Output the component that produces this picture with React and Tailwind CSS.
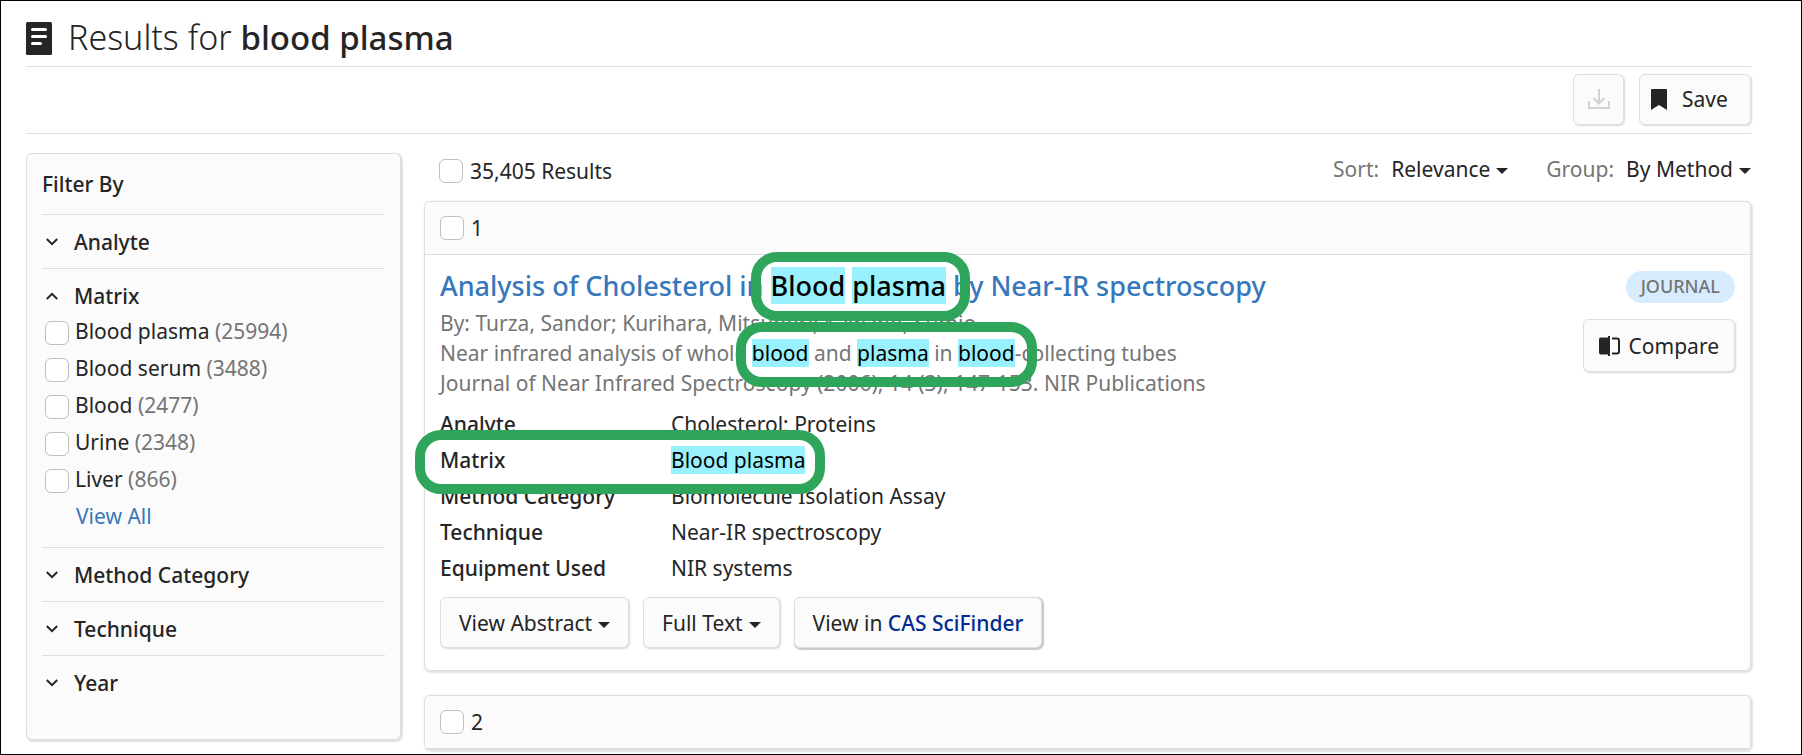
import clsx from "clsx";

const facets = [
    { name: "Analyte" },
    {
        name: "Matrix",
        options: [
            { label: "Blood plasma", count: 25994 },
            { label: "Blood serum", count: 3488 },
            { label: "Blood", count: 2477 },
            { label: "Urine", count: 2348 },
            { label: "Liver", count: 866 },
        ],
    },
    { name: "Method Category" },
    { name: "Technique" },
    { name: "Year" },
];

const details = [
    ["Analyte", "Cholesterol; Proteins"],
    ["Matrix", "Blood plasma"],
    ["Method Category", "Biomolecule Isolation Assay"],
    ["Technique", "Near-IR spectroscopy"],
    ["Equipment Used", "NIR systems"],
];

const Chevron = ({ open }) => (
    <svg viewBox="0 0 12 8" className={clsx("w-3 h-2 shrink-0", open && "rotate-180")} fill="none" stroke="#252525" strokeWidth="2">
        <path d="M0.8 1l5.2 5.2L11.2 1" />
    </svg>
);

const Caret = () => (
    <svg viewBox="0 0 12 6" className="w-3 h-[6px] mt-1 shrink-0" fill="#252525">
        <path d="M0 0h12L6 6z" />
    </svg>
);

const Checkbox = ({ id }) => (
    <input
        id={id}
        type="checkbox"
        className="appearance-none size-6 shrink-0 rounded-md border border-[#bfbfbf] bg-white checked:bg-[#3777bc]"
    />
);

const PanelButton = ({ className, children, ...props }) => (
    <button
        className={clsx("flex items-center rounded-md border border-[#dedede] bg-[#fbfbfb]", className)}
        {...props}
    >
        {children}
    </button>
);

const Mark = ({ children }) => <mark className="bg-[#98f1fd] text-black">{children}</mark>;

const Ring = ({ className }) => (
    <span className={clsx("absolute z-10 border-[10px] border-[#2ea55b] rounded-[26px] pointer-events-none", className)} />
);

const Facet = ({ name, options }) => (
    <section className="border-t border-[#dedede] pt-3">
        <h3>
            <button className="flex items-center gap-4 pl-1 h-[29px] font-medium" aria-expanded={!!options}>
                <Chevron open={!!options} />
                {name}
            </button>
        </h3>
        {options ? (
            <div className="pt-[7px] pb-[17px]">
                <ul>
                    {options.map((option, i) => (
                        <li key={option.label} className="flex items-start gap-[6px] h-[37px] pl-[3px]">
                            <span className="pt-1 h-7">
                                <Checkbox id={`facet-${i}`} />
                            </span>
                            <label htmlFor={`facet-${i}`} className="leading-[28px]">
                                {option.label} <span className="text-[#757575]">({option.count})</span>
                            </label>
                        </li>
                    ))}
                </ul>
                <a href="#all" className="block pl-[34px] leading-[28px] text-[#3777bc]">View All</a>
            </div>
        ) : (
            <div className="h-3" />
        )}
    </section>
);

const Sidebar = () => (
    <aside className="w-[375px] shrink-0 self-start rounded-md border border-[#dedede] bg-[#fbfbfb] shadow-[1px_1px_1px_1px_#e2e2e2] px-[15px] pb-[30px]">
        <h2 className="h-[60px] pt-4 leading-[28px] font-medium">Filter By</h2>
        {facets.map((facet) => (
            <Facet key={facet.name} {...facet} />
        ))}
    </aside>
);

const ResultCard = ({ number, children }) => (
    <article className="rounded-md border border-[#dedede] bg-white shadow-[1px_1px_2px_1px_#e2e2e2]">
        <div className="flex items-center gap-[7px] h-[53px] px-[15px] rounded-t-md border-b border-[#dedede] bg-[#fbfbfb]">
            <Checkbox id={`result-${number}`} />
            <label htmlFor={`result-${number}`}>{number}</label>
        </div>
        {children}
    </article>
);

const App = () => {
    return (
        <div className="h-screen overflow-hidden border border-black bg-white pl-[25px] pr-[50px] font-['Noto_Sans','Open_Sans',sans-serif] text-[21px] leading-[30px] text-[#252525]">
            <header className="flex items-center gap-4 h-[66px] border-b border-[#dedede]">
                <svg viewBox="0 0 26 33" className="w-[26px] h-[33px] mt-[10px]">
                    <rect width="26" height="33" rx="1.5" fill="#252525" />
                    <path d="M6.500 7.500h13M6.500 14.500h13M6.500 21.500h8" stroke="#fff" strokeWidth="3" strokeLinecap="round" />
                </svg>
                <h1 className="pt-2 text-[34px] leading-[40px] font-light">
                    Results for <span className="text-[33px] font-medium">blood plasma</span>
                </h1>
            </header>

            <div className="flex items-center justify-end gap-[15px] h-[67px] pb-[2px] border-b border-[#dedede]">
                <PanelButton className="size-[51px] justify-center shadow-[1px_1px_2px_#d8d8d8]" aria-label="Download">
                    <svg viewBox="0 0 22 20" className="w-[22px] h-5" fill="none" stroke="#d2d2d2" strokeWidth="2">
                        <path d="M1 12v7h20v-7M11 0v14M5.500 9l5.500 5.500L16.500 9" />
                    </svg>
                </PanelButton>
                <PanelButton className="h-[51px] w-[112px] pl-[11px] gap-[15px] shadow-[1px_1px_2px_#d8d8d8]">
                    <svg viewBox="0 0 16 21" className="w-4 h-[21px]" fill="#252525">
                        <path d="M1 0h14q1 0 1 1v20l-8-5-8 5V1q0-1 1-1z" />
                    </svg>
                    Save
                </PanelButton>
            </div>

            <div className="flex items-start gap-[23px] pt-[19px]">
                <Sidebar />
                <main className="grow">
                    <div className="flex justify-between h-12 pl-[15px]">
                        <div className="flex items-center gap-[7px] h-9">
                            <Checkbox id="all-results" />
                            <label htmlFor="all-results">35,405 Results</label>
                        </div>
                        <div className="flex items-center gap-[38px] h-8">
                            <div className="flex items-center gap-3">
                                <span className="text-[#757575]">Sort:</span>
                                <button className="flex items-center gap-[6px]">Relevance <Caret /></button>
                            </div>
                            <div className="flex items-center gap-3">
                                <span className="text-[#757575]">Group:</span>
                                <button className="flex items-center gap-[6px]">By Method <Caret /></button>
                            </div>
                        </div>
                    </div>

                    <div className="flex flex-col gap-6">
                        <ResultCard number={1}>
                            <div className="flex justify-between px-[15px] pt-[11px] pb-[22px]">
                                <div>
                                    <h2 className="pb-[2px] text-[27px] leading-[40px] font-medium text-[#3777bc]">
                                        <a href="#result">
                                            Analysis of Cholesterol in{" "}
                                            <span className="relative">
                                                <Mark>Blood</Mark> <Mark>plasma</Mark>
                                                <Ring className="-left-5 -right-6 -top-[15px] -bottom-[17px]" />
                                            </span>{" "}
                                            by Near-IR spectroscopy
                                        </a>
                                    </h2>
                                    <div className="text-[#757575]">
                                        <p>By: Turza, Sandor; Kurihara, Mitsunori; Kawano, Sumio</p>
                                        <p>
                                            Near infrared analysis of whole{" "}
                                            <span className="relative">
                                                <Mark>blood</Mark> and <Mark>plasma</Mark> in <Mark>blood</Mark>
                                                <Ring className="-left-4 -right-[22px] -top-[17px] -bottom-5" />
                                            </span>
                                            -collecting tubes
                                        </p>
                                        <p>Journal of Near Infrared Spectroscopy (2006), 14 (3), 147-153. NIR Publications</p>
                                    </div>
                                    <dl className="grid grid-cols-[231px_auto] justify-start pt-[8px] leading-[36px]">
                                        {details.map(([term, value]) => (
                                            <div key={term} className="contents">
                                                <dt className="font-medium">{term}</dt>
                                                {term === "Matrix" ? (
                                                    <dd>
                                                        <span className="relative">
                                                            <Mark>{value}</Mark>
                                                            <Ring className="-left-[256px] -right-5 -top-4 -bottom-5" />
                                                        </span>
                                                    </dd>
                                                ) : (
                                                    <dd>{value}</dd>
                                                )}
                                            </div>
                                        ))}
                                    </dl>
                                    <div className="flex gap-[14px] pt-[11px]">
                                        <PanelButton className="h-[51px] px-[18px] gap-[6px] shadow-[1px_1px_2px_#d8d8d8]">View Abstract <Caret /></PanelButton>
                                        <PanelButton className="h-[51px] px-[18px] gap-[6px] shadow-[1px_1px_2px_#d8d8d8]">Full Text <Caret /></PanelButton>
                                        <PanelButton className="h-[51px] px-[18px] shadow-[1px_1px_1px_1px_#c9c9c9]">
                                            <span>View in <span className="font-medium text-[#002b92]">CAS SciFinder</span></span>
                                        </PanelButton>
                                    </div>
                                </div>
                                <div className="flex flex-col items-end gap-4 pt-[5px]">
                                    <span className="rounded-full bg-[#d8ecff] px-[15px] h-8 leading-[31px] text-[18px] font-medium text-[#757575]">JOURNAL</span>
                                    <PanelButton className="h-[53px] px-[15px] gap-2 shadow-[1px_1px_2px_#d8d8d8]">
                                        <svg viewBox="0 0 22 20" className="w-[22px] h-5">
                                            <path d="M2 1.500h7V0h2v20H9v-1.500H2q-2 0-2-2v-13q0-2 2-2z" fill="#252525" />
                                            <path d="M13 2.500h5q2 0 2 2v11q0 2-2 2h-5" fill="none" stroke="#252525" strokeWidth="2" />
                                        </svg>
                                        Compare
                                    </PanelButton>
                                </div>
                            </div>
                        </ResultCard>
                        <ResultCard number={2} />
                    </div>
                </main>
            </div>
        </div>
    );
};

export default App;
